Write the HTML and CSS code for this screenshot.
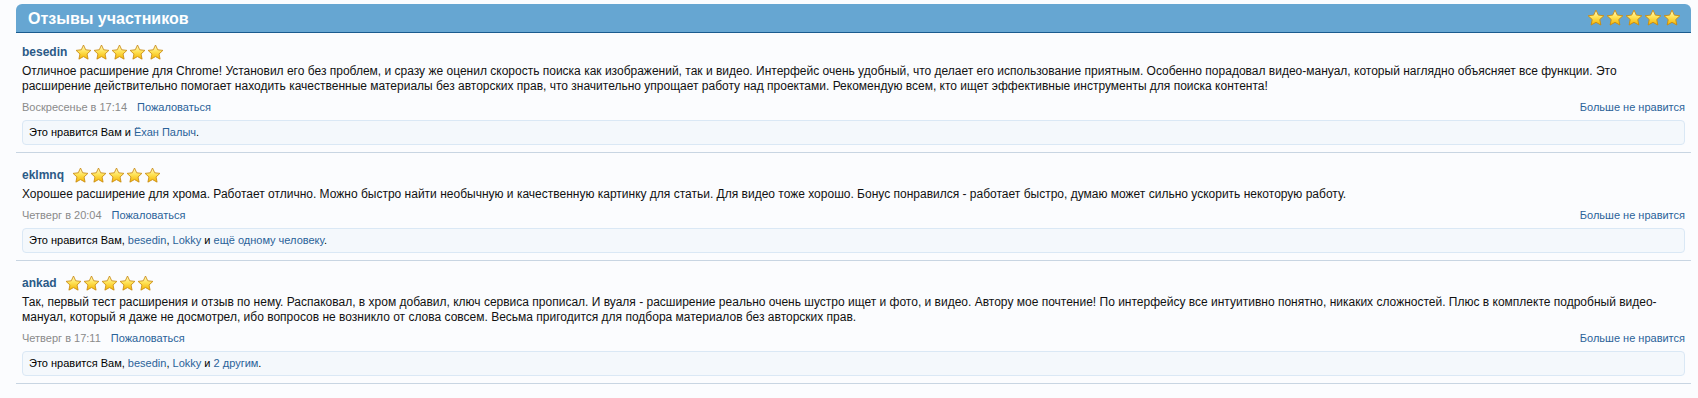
FILE: index.html
```html
<!DOCTYPE html>
<html lang="ru">
<head>
    <meta charset="UTF-8">
    <title>Отзывы участников</title>
    <link rel="stylesheet" href="styles.css">
</head>
<body>
    <svg class="defs" width="0" height="0">
        <defs>
            <linearGradient id="starFill" x1="0" y1="0" x2="0" y2="1">
                <stop offset="0" stop-color="#fffbd0"/>
                <stop offset="0.45" stop-color="#ffe45a"/>
                <stop offset="1" stop-color="#f4b400"/>
            </linearGradient>
            <symbol id="star" viewBox="0 0 20 20">
                <path d="M10 1.2l2.6 5.6 6.1.7-4.5 4.2 1.2 6.1L10 14.8l-5.4 3 1.2-6.1L1.3 7.5l6.1-.7z" fill="url(#starFill)" stroke="#c98a10" stroke-width="1" stroke-linejoin="round"/>
            </symbol>
        </defs>
    </svg>

    <section class="reviews">
        <header class="reviews-head">
            <h2>Отзывы участников</h2>
            <span class="stars big">
                <svg><use href="#star"/></svg><svg><use href="#star"/></svg><svg><use href="#star"/></svg><svg><use href="#star"/></svg><svg><use href="#star"/></svg>
            </span>
        </header>

        <div class="review">
            <div class="review-author">
                <a href="#" class="name">besedin</a>
                <span class="stars">
                    <svg><use href="#star"/></svg><svg><use href="#star"/></svg><svg><use href="#star"/></svg><svg><use href="#star"/></svg><svg><use href="#star"/></svg>
                </span>
            </div>
            <p class="review-text">Отличное расширение для Chrome! Установил его без проблем, и сразу же оценил скорость поиска как изображений, так и видео. Интерфейс очень удобный, что делает его использование приятным. Особенно порадовал видео-мануал, который наглядно объясняет все функции. Это расширение действительно помогает находить качественные материалы без авторских прав, что значительно упрощает работу над проектами. Рекомендую всем, кто ищет эффективные инструменты для поиска контента!</p>
            <div class="review-meta">
                <span class="date">Воскресенье в 17:14</span>
                <a href="#" class="report">Пожаловаться</a>
                <a href="#" class="unlike">Больше не нравится</a>
            </div>
            <div class="likes">Это нравится Вам и <a href="#">Ёхан Палыч</a>.</div>
        </div>

        <div class="review">
            <div class="review-author">
                <a href="#" class="name">eklmnq</a>
                <span class="stars">
                    <svg><use href="#star"/></svg><svg><use href="#star"/></svg><svg><use href="#star"/></svg><svg><use href="#star"/></svg><svg><use href="#star"/></svg>
                </span>
            </div>
            <p class="review-text">Хорошее расширение для хрома. Работает отлично. Можно быстро найти необычную и качественную картинку для статьи. Для видео тоже хорошо. Бонус понравился - работает быстро, думаю может сильно ускорить некоторую работу.</p>
            <div class="review-meta">
                <span class="date">Четверг в 20:04</span>
                <a href="#" class="report">Пожаловаться</a>
                <a href="#" class="unlike">Больше не нравится</a>
            </div>
            <div class="likes">Это нравится Вам, <a href="#">besedin</a>, <a href="#">Lokky</a> и <a href="#">ещё одному человеку</a>.</div>
        </div>

        <div class="review">
            <div class="review-author">
                <a href="#" class="name">ankad</a>
                <span class="stars">
                    <svg><use href="#star"/></svg><svg><use href="#star"/></svg><svg><use href="#star"/></svg><svg><use href="#star"/></svg><svg><use href="#star"/></svg>
                </span>
            </div>
            <p class="review-text">Так, первый тест расширения и отзыв по нему. Распаковал, в хром добавил, ключ сервиса прописал. И вуаля - расширение реально очень шустро ищет и фото, и видео. Автору мое почтение! По интерфейсу все интуитивно понятно, никаких сложностей. Плюс в комплекте подробный видео-мануал, который я даже не досмотрел, ибо вопросов не возникло от слова совсем. Весьма пригодится для подбора материалов без авторских прав.</p>
            <div class="review-meta">
                <span class="date">Четверг в 17:11</span>
                <a href="#" class="report">Пожаловаться</a>
                <a href="#" class="unlike">Больше не нравится</a>
            </div>
            <div class="likes">Это нравится Вам, <a href="#">besedin</a>, <a href="#">Lokky</a> и <a href="#">2 другим</a>.</div>
        </div>
    </section>
</body>
</html>
```

FILE: styles.css
```css
body {
    margin: 0;
    padding: 4px 7px 0 16px;
    background-color: #fbfcfe;
    font-family: "Liberation Sans", Arial, sans-serif;
    font-size: 12px;
    line-height: 15px;
    color: #111;
}
a {
    color: #2a6299;
    text-decoration: none;
}
.defs {
    position: absolute;
}
.reviews-head {
    display: flex;
    align-items: center;
    justify-content: space-between;
    height: 28px;
    padding: 0 10px 0 12px;
    background-color: #66a6d2;
    border-bottom: 1px solid #1a5b8f;
    border-radius: 6px 6px 0 0;
}
.reviews-head h2 {
    margin: 0;
    color: #fff;
    font-size: 16px;
    font-weight: bold;
}
.stars {
    display: inline-flex;
    gap: 1px;
}
.stars svg {
    width: 17px;
    height: 17px;
}
.stars.big svg {
    width: 18px;
    height: 18px;
}
.review {
    padding: 9px 6px 7px 6px;
    border-bottom: 1px solid #c8d5e2;
}
.review + .review {
    padding-top: 12px;
}
.review-author {
    display: flex;
    align-items: center;
    gap: 8px;
    height: 20px;
}
.review-author .name {
    font-weight: bold;
    font-size: 12px;
    color: #2b5a87;
}
.review-text {
    margin: 2px 0 0;
}
.review-meta {
    display: flex;
    gap: 10px;
    margin-top: 6px;
    font-size: 11px;
}
.review-meta .date {
    color: #8a8a8a;
}
.review-meta .unlike {
    margin-left: auto;
}
.likes {
    margin-top: 5px;
    padding: 4px 6px;
    background-color: #f4f8fc;
    border: 1px solid #dae8f5;
    border-radius: 4px;
    font-size: 11px;
    color: #000;
}
```
